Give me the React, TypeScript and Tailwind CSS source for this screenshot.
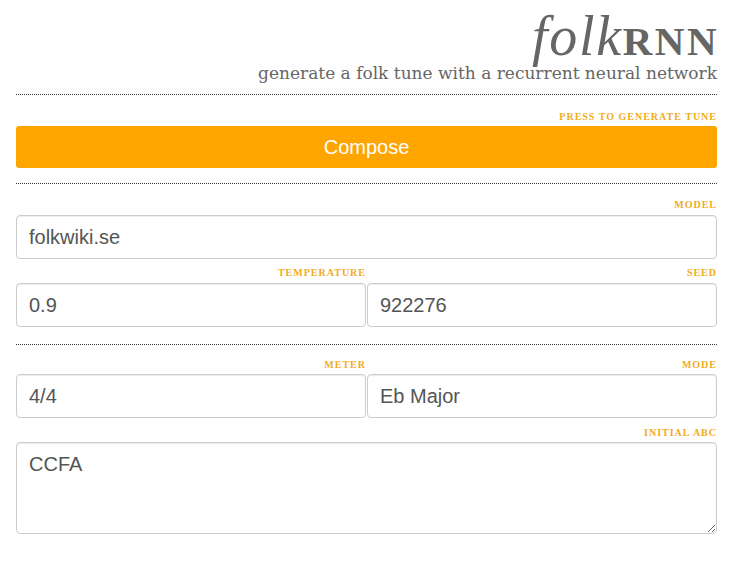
import React from 'react'

const serif = { fontFamily: '"Liberation Serif", "DejaVu Serif", serif' }

function Label({ children }: { children: React.ReactNode }) {
  return (
    <div
      className="h-[12px] text-right text-[10px] font-bold uppercase leading-[12px] tracking-[0.1em] text-[#f0ac1c]"
      style={serif}
    >
      {children}
    </div>
  )
}

function Field({ value }: { value: string }) {
  return (
    <input
      readOnly
      value={value}
      className="h-[44px] w-full rounded-[4px] border border-[#cccccc] bg-white px-[12px] text-[20px] text-[#555555] shadow-[inset_0_1px_1px_rgba(0,0,0,0.075)] outline-none"
      style={{ fontFamily: '"Liberation Sans", Arial, sans-serif' }}
    />
  )
}

export default function App() {
  return (
    <div className="min-h-[562px] w-full bg-white px-[16px]">
      {/* Header */}
      <div className="pt-[8px] text-right text-[#666666]" style={serif}>
        <div className="h-[54px] leading-none">
          <span className="text-[56px] italic tracking-[0.03em]">folk</span>
          <span className="text-[41px] font-bold tracking-[0.06em] mr-[-2px]">RNN</span>
        </div>
        <div
          className="mt-[3px] text-[17px] leading-none"
          style={{ fontFamily: '"DejaVu Serif", "Liberation Serif", serif' }}
        >
          generate a folk tune with a recurrent neural network
        </div>
      </div>
      <div className="mt-[12px] border-t border-dotted border-[#333333]" />

      {/* Compose */}
      <div className="mt-[16px]">
        <Label>Press to generate tune</Label>
        <button
          className="mt-[3px] h-[42px] w-full rounded-[3px] bg-[#ffa500] text-[20px] text-white"
          style={{ fontFamily: '"Liberation Sans", Arial, sans-serif' }}
        >
          Compose
        </button>
      </div>
      <div className="mt-[15px] border-t border-dotted border-[#333333]" />

      {/* Model settings */}
      <div className="mt-[15px]">
        <Label>Model</Label>
        <div className="mt-[4px]">
          <Field value="folkwiki.se" />
        </div>
      </div>
      <div className="mt-[8px] flex gap-[1px]">
        <div className="flex-1">
          <Label>Temperature</Label>
          <div className="mt-[4px]">
            <Field value="0.9" />
          </div>
        </div>
        <div className="flex-1">
          <Label>Seed</Label>
          <div className="mt-[4px]">
            <Field value="922276" />
          </div>
        </div>
      </div>
      <div className="mt-[17px] border-t border-dotted border-[#333333]" />

      {/* Tune settings */}
      <div className="mt-[14px] flex gap-[1px]">
        <div className="flex-1">
          <Label>Meter</Label>
          <div className="mt-[3px]">
            <Field value="4/4" />
          </div>
        </div>
        <div className="flex-1">
          <Label>Mode</Label>
          <div className="mt-[3px]">
            <Field value="Eb Major" />
          </div>
        </div>
      </div>
      <div className="mt-[9px]">
        <Label>Initial ABC</Label>
        <textarea
          readOnly
          value="CCFA"
          className="mt-[3px] block h-[92px] w-full rounded-[4px] border border-[#cccccc] bg-white px-[12px] py-[6px] text-[20px] text-[#555555] shadow-[inset_0_1px_1px_rgba(0,0,0,0.075)] outline-none"
          style={{ fontFamily: '"Liberation Sans", Arial, sans-serif' }}
        />
      </div>
    </div>
  )
}
